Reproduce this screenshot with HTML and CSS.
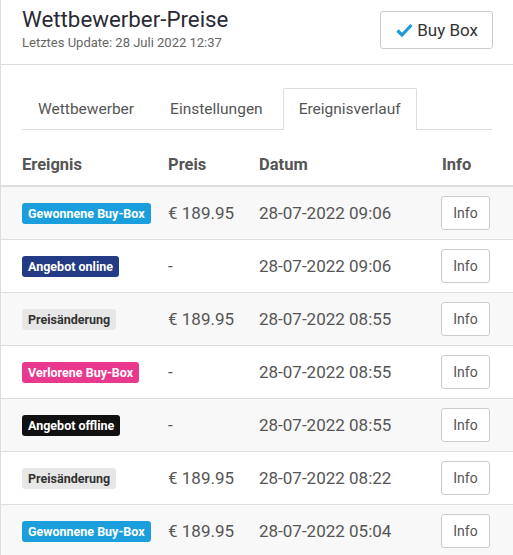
FILE: index.html
```html
<!DOCTYPE html>
<html lang="de">
<head>
    <meta charset="UTF-8">
    <meta name="viewport" content="width=device-width, initial-scale=1.0">
    <title>Wettbewerber-Preise</title>
    <link rel="stylesheet" href="styles.css">
</head>
<body>
    <div class="card">
        <header class="card-header">
            <div>
                <h1>Wettbewerber-Preise</h1>
                <div class="subtitle">Letztes Update: 28 Juli 2022 12:37</div>
            </div>
            <button class="buybox-btn">
                <svg width="17" height="14" viewBox="0 0 17 14"><path d="M1.5 7.5 L6 12 L15.5 2" fill="none" stroke="#1e9ad6" stroke-width="3.2" stroke-linejoin="miter"/></svg>
                Buy Box
            </button>
        </header>

        <ul class="tabs">
            <li>Wettbewerber</li>
            <li>Einstellungen</li>
            <li class="active">Ereignisverlauf</li>
        </ul>

        <div class="events">
            <div class="row head">
                <div>Ereignis</div>
                <div>Preis</div>
                <div>Datum</div>
                <div>Info</div>
            </div>
            <div class="row">
                <div><span class="badge won">Gewonnene Buy-Box</span></div>
                <div>&euro; 189.95</div>
                <div>28-07-2022 09:06</div>
                <div><button class="info-btn">Info</button></div>
            </div>
            <div class="row">
                <div><span class="badge online">Angebot online</span></div>
                <div>-</div>
                <div>28-07-2022 09:06</div>
                <div><button class="info-btn">Info</button></div>
            </div>
            <div class="row">
                <div><span class="badge change">Preisänderung</span></div>
                <div>&euro; 189.95</div>
                <div>28-07-2022 08:55</div>
                <div><button class="info-btn">Info</button></div>
            </div>
            <div class="row">
                <div><span class="badge lost">Verlorene Buy-Box</span></div>
                <div>-</div>
                <div>28-07-2022 08:55</div>
                <div><button class="info-btn">Info</button></div>
            </div>
            <div class="row">
                <div><span class="badge offline">Angebot offline</span></div>
                <div>-</div>
                <div>28-07-2022 08:55</div>
                <div><button class="info-btn">Info</button></div>
            </div>
            <div class="row">
                <div><span class="badge change">Preisänderung</span></div>
                <div>&euro; 189.95</div>
                <div>28-07-2022 08:22</div>
                <div><button class="info-btn">Info</button></div>
            </div>
            <div class="row">
                <div><span class="badge won">Gewonnene Buy-Box</span></div>
                <div>&euro; 189.95</div>
                <div>28-07-2022 05:04</div>
                <div><button class="info-btn">Info</button></div>
            </div>
        </div>
    </div>
</body>
</html>
```

FILE: styles.css
```css
* {
    box-sizing: border-box;
}

body {
    font-family: Roboto, "Liberation Sans", sans-serif;
    background-color: #fff;
    color: #333;
    margin: 0;
    padding: 0;
}

.card {
    border-left: 1px solid #ddd;
    min-height: 555px;
}

.card-header {
    display: flex;
    justify-content: space-between;
    align-items: flex-start;
    padding: 5px 21px 0 21px;
    height: 65px;
    border-bottom: 1px solid #ddd;
}

.card-header h1 {
    font-size: 22.3px;
    font-weight: 400;
    margin: 0;
    line-height: 28px;
    color: #2a2a36;
}

.subtitle {
    font-size: 13px;
    color: #666;
    margin-top: 2px;
}

.buybox-btn {
    display: flex;
    align-items: center;
    gap: 4px;
    margin-top: 6px;
    margin-right: -1px;
    height: 38px;
    padding: 0 14px 0 15px;
    background: #fff;
    border: 1px solid #ccc;
    border-radius: 3px;
    font-family: inherit;
    font-size: 17px;
    color: #333;
}

.tabs {
    list-style: none;
    display: flex;
    margin: 23px 21px 0 21px;
    padding: 0;
    border-bottom: 1px solid #ddd;
}

.tabs li {
    padding: 0 15px;
    margin-right: 4px;
    height: 41px;
    line-height: 40px;
    font-size: 15.5px;
    color: #555;
    border: 1px solid transparent;
    border-bottom: none;
    margin-bottom: -1px;
}

.tabs li.active {
    background: #fff;
    border-color: #ddd;
    border-radius: 2px 2px 0 0;
    height: 42px;
}

.row {
    display: grid;
    grid-template-columns: 146px 91px 183px 1fr;
    align-items: center;
    padding-left: 21px;
    height: 53px;
    border-top: 1px solid #ddd;
    font-size: 17px;
    color: #555;
}

.row:nth-child(even) {
    background-color: #f8f8f8;
}

.row.head {
    height: 56px;
    border-top: none;
    border-bottom: 1px solid #ddd;
    font-size: 16.5px;
    font-weight: 700;
    color: #555;
    padding-top: 13px;
}

.badge {
    display: inline-block;
    padding: 0 6px;
    height: 21px;
    line-height: 21px;
    border-radius: 3px;
    font-size: 12.5px;
    font-weight: 700;
    color: #fff;
}

.badge.won { background-color: #1a9fdc; }
.badge.online { background-color: #233a84; }
.badge.change { background-color: #e7e7e7; color: #333; }
.badge.lost { background-color: #e8398e; }
.badge.offline { background-color: #111; }

.info-btn {
    width: 49px;
    height: 34px;
    margin-left: -1px;
    background: #fff;
    border: 1px solid #ccc;
    border-radius: 3px;
    font-family: inherit;
    font-size: 14px;
    color: #555;
}
```
